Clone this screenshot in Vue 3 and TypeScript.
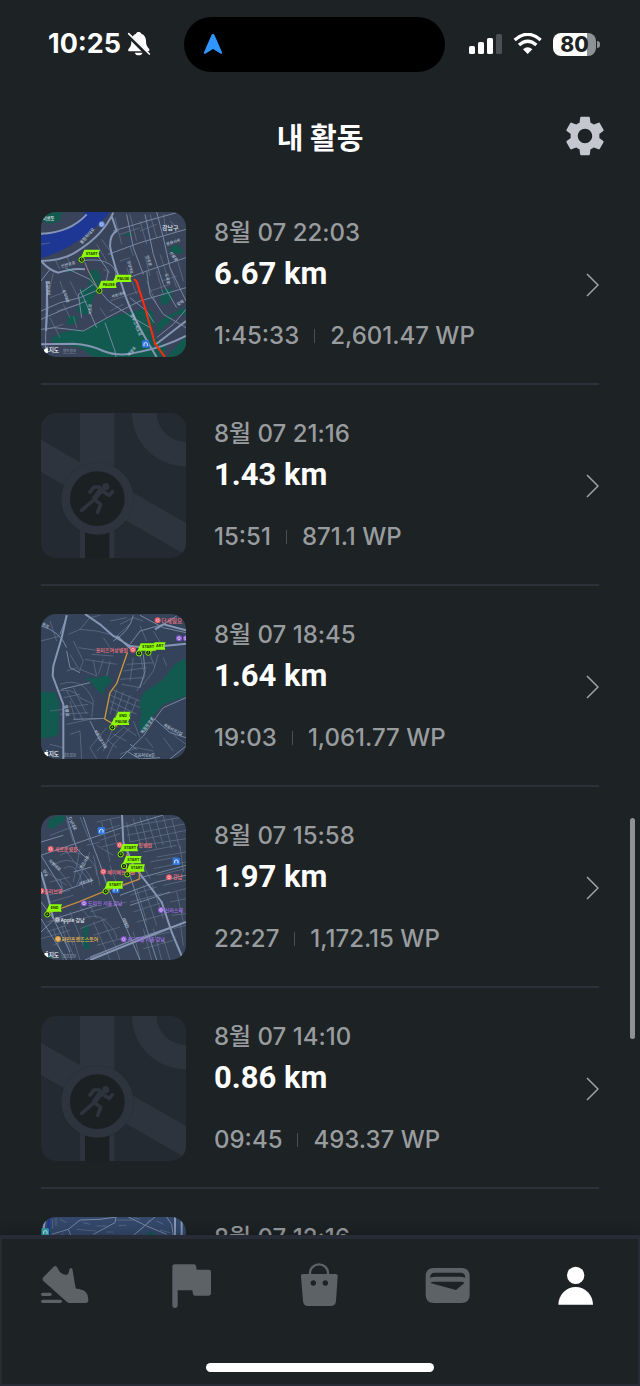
<script setup lang="ts">
interface Label { t: string; x: number; y: number; c?: string; r?: number; s?: number }
interface Pin { t: string; x: number; y: number; w?: number; dx?: number; dy?: number }
interface Badge { x: number; y: number; c: string; k: 'dot' | 'box' }
interface MapArt {
  box: string
  land: string
  parks: string
  water: string
  minor: string
  mid: string
  major: string
  route: string
  routeColor: string
  faint: string
  labels: Label[]
  badges: Badge[]
  pins: Pin[]
}
interface Activity { id: number; date: string; km: string; time: string; wp: string; map: MapArt | null }

const RED = '#f5747e'
const VIOLET = '#a673e8'
const ROAD = '#b9c5d8'

const gangnam: MapArt = {
  box: '33 33 435 435',
  land: '#39445a',
  parks: 'M60 415L95 395 140 385 165 390 215 360 270 340 340 325 368 332 375 365 360 385 380 415 410 440 400 468 190 468 150 440 70 425ZM150 265L175 260 180 210 200 205 212 225 205 262 190 290 178 335 160 342 140 330 150 300ZM112 345L145 345 140 365 112 375ZM380 370L400 350 468 318V345L440 340 380 400ZM392 290L400 265 425 262 428 290 410 312 394 310ZM420 140L440 130 460 150 450 160 422 155ZM286 98l16-5 4 10-14 4ZM105 205l22-5 3 12-20 3ZM35 33H95L90 60 60 68 33 60ZM435 440L468 405V468H410Z',
  water: 'M33 100Q80 98 105 85 150 65 165 33H240Q215 65 180 92 120 145 33 172Z',
  minor: 'M70 215L60 260M90 240L110 300M80 330L150 310M60 350L90 410M120 240L150 300M90 205L75 175M120 190L110 165 160 140M200 130L230 180M215 115L240 150M255 50L275 130M300 40L320 120M330 60L350 130M360 40L380 110M400 40L410 100M270 180L300 170M290 200L320 280M240 300L330 270M350 240L380 310M380 210L400 280M420 200L440 260M270 100L330 80M330 90L380 70M390 160L410 220M440 170L460 240M130 345L140 380M100 310L120 350M60 290L100 275M240 330L280 310M300 135L310 165M345 165L360 225M395 240L440 225M360 270L420 250M420 60L450 90M50 385L100 370M220 205L240 215M33 130L60 125M210 320L230 350',
  mid: 'M60 205L33 240M50 250L46 468M33 330L90 305 150 290 230 255 350 210 468 170M33 385L75 380 160 390 250 340 330 300 468 260M105 200L180 235 235 300 300 345 360 380M200 160L235 210 225 260M250 90L350 60 440 35M235 160L330 125 468 85M345 40L370 160 400 250 440 320M290 40L310 140 340 220M380 33L400 110 420 200 468 300M150 180Q210 170 240 190 270 210 250 250M33 355L90 330 170 300M150 265L200 380M225 365L255 450 258 468M300 290L350 330 372 365M350 210L360 280 400 340 468 380M380 410L430 370 468 325M190 250L145 280 155 350',
  major: 'M33 180Q110 178 150 145 220 100 250 35M33 98Q120 95 170 40M245 45L260 90Q240 100 240 135 250 190 275 250 300 340 380 468M33 180Q60 210 85 215 130 200 165 205M33 430L130 428Q180 430 220 450 270 470 330 452 400 440 468 405M50 240L52 320 48 390M378 430L468 360',
  route: 'M312 234L320 242 345 320 375 428 405 468',
  routeColor: '#ff2a0d',
  faint: 'M165 185L175 210 205 265',
  labels: [
    { t: '강남구', x: 396, y: 87, c: '#dfe5ee', s: 18 },
    { t: '이름동', x: 38, y: 56, c: '#eef2f7', s: 13 },
    { t: '올림픽대로', x: 155, y: 130, r: -48, s: 13 },
    { t: '신반포로', x: 94, y: 200, r: -14, s: 12 },
    { t: '강남대로', x: 292, y: 180, r: 76, s: 11 },
    { t: '반포대로', x: 50, y: 240, r: 88, s: 12 },
    { t: '서초대로', x: 245, y: 292, r: -18, s: 12 },
    { t: '동작대로', x: 97, y: 268, r: 70, s: 11 },
    { t: '서초로', x: 184, y: 342, r: -88, s: 12 },
    { t: '경부고속도로', x: 301, y: 340, r: 68, s: 13 },
    { t: '봉은사로', x: 410, y: 134, r: -18, s: 12 },
    { t: '언주로', x: 347, y: 165, r: 72, s: 12 },
    { t: '선릉로', x: 418, y: 155, r: 55, s: 12 },
    { t: '도곡로', x: 405, y: 218, r: 78, s: 12 },
    { t: '양재', x: 444, y: 315, r: -32, s: 12 },
    { t: '태봉로', x: 298, y: 466, r: -50, s: 12 },
  ],
  badges: [{ x: 215, y: 70, c: '#5f8ee0', k: 'dot' }, { x: 347, y: 429, c: '#2f76e0', k: 'box' }],
  pins: [
    { t: 'START', x: 163, y: 146, dx: 155, dy: 176 },
    { t: 'PAUSE', x: 258, y: 221 },
    { t: 'PAUSE', x: 214, y: 239, dx: 208, dy: 269 },
  ],
}

const hospital: MapArt = {
  box: '33 29 435 435',
  land: '#35435a',
  parks: 'M164 218L195 222 235 212 245 232 225 250 218 272 200 255 185 235ZM33 262L75 264 88 295 85 390 60 400 33 402ZM468 160L435 180 400 225 340 265 328 300 335 325 325 370 345 385 365 340 400 300 468 275Z',
  water: '',
  minor: 'M60 50L80 110M33 110L90 95M115 90L150 75 200 80M130 110L160 170 150 195 200 215M145 130L215 140M120 150L150 200M110 200L140 190M150 75L180 40 210 33M200 80L260 95 300 60M220 100L240 130M240 50L290 40M270 60L310 40 340 50M330 65L350 110M370 80L400 130M190 170L200 215M220 165L205 210M240 170L230 215M165 165L260 180M185 150L250 155M90 240Q160 215 190 290L185 340M80 260Q130 250 150 280L190 300M100 280L150 270M100 310L175 300M110 260L150 330 160 350M90 330L175 325M130 250L170 330M120 290L135 345M110 360L180 345 225 342M235 270L330 310M245 255L330 290M240 290L320 330M240 310L300 340M260 255L240 330M280 262L255 340M300 272L275 345M320 285L295 350M270 225L340 220M280 200L350 190M290 180L370 175M275 240L330 250M330 150L345 215 320 260M360 150L375 190M385 150L370 200 340 240M400 160L410 185M310 160L300 230M230 370L180 430 200 464M245 380L220 440M300 370L250 420 230 464M280 370L200 440M320 395L270 360M310 350L330 400M250 390L290 410M230 405L260 430M120 390L150 380 155 464M60 420L100 430M60 320L100 315M345 400L370 430M400 400L430 440M410 360L440 400 468 420M270 450L320 430 370 440',
  mid: 'M33 65Q90 80 110 130M112 33L90 90M110 140L120 190 150 205M250 110Q300 80 310 33M300 120L330 80 400 60M330 33L400 70 468 85M400 60L440 35M130 345L225 342M340 150L345 200 330 250M370 350L400 310 468 280M370 350L340 395 270 464M180 350L210 410M300 420L320 435M420 464L468 425M290 440L330 464 390 460M375 345L420 385 468 400M95 255L180 235',
  major: 'M110 33L95 100 70 185 68 215 100 300 100 464M165 29L210 60 250 95 300 125 350 130 468 118M260 95L310 140M375 75L400 60 468 78',
  route: 'M292 145L260 238 240 265 224 344 262 366',
  routeColor: '#c9963f',
  faint: '',
  labels: [
    { t: '더세일요', x: 394, y: 55, c: RED, s: 17 },
    { t: '포미즈여성병원', x: 197, y: 143, c: RED, s: 15 },
    { t: '원로', x: 35, y: 62, r: 28, s: 12 },
    { t: '청룡로', x: 103, y: 302, r: 82, s: 13 },
    { t: '북중앙로14길', x: 192, y: 380, r: 58, s: 11 },
    { t: '복음중앙로', x: 338, y: 390, r: -54, s: 13 },
    { t: '복음서로2길', x: 400, y: 365, r: 28, s: 12 },
    { t: '복음서로6길', x: 312, y: 459, s: 12 },
  ],
  badges: [
    { x: 383, y: 48, c: '#e85c66', k: 'dot' },
    { x: 309, y: 136, c: '#e85c66', k: 'dot' },
    { x: 447, y: 102, c: '#8c5cd8', k: 'dot' },
    { x: 468, y: 102, c: '#8c5cd8', k: 'dot' },
  ],
  pins: [
    { t: 'ART', x: 374, y: 114, w: 33, dx: 355, dy: 145 },
    { t: 'START', x: 332, y: 117, dx: 327, dy: 147 },
    { t: 'END', x: 264, y: 322, w: 38 },
    { t: 'PAUSE', x: 252, y: 340, dx: 247, dy: 369 },
  ],
}

const downtown: MapArt = {
  box: '33 29 435 435',
  land: '#37445a',
  parks: 'M60 40L90 29 106 35 100 50 65 72 52 62ZM160 365L172 357 178 370 170 395 180 430 165 432 158 410ZM33 445L60 450 65 464H33Z',
  water: '',
  minor: 'M110 45L130 110M150 35L180 110M60 90L140 60M200 50L270 35M205 80L270 60M210 105L270 85M215 125L265 112M215 50L240 170M240 40L260 110M290 50L300 110M310 40L335 130M330 35L355 130M350 33L380 130M375 33L400 120M400 33L425 130M425 40L450 130M290 65L460 35M290 90L468 55M300 110L468 75M340 120L468 100M340 140L440 120M380 155L468 140M360 170L440 155M370 190L468 170M380 210L468 190M400 240L468 225M410 265L468 250M420 290L468 280M425 330L468 325M90 150Q120 130 160 150T200 210M70 180Q110 150 150 180T185 240M100 190Q130 170 150 210L160 250M60 160L130 250M110 140L180 230M50 200L110 240M60 230L120 215M150 130L130 230M180 140L140 240M90 220L100 260M50 270L120 255M60 290L130 270M190 150L210 240M210 180L230 240M240 180L260 235M90 330L130 420M120 320L160 420M150 305L180 340M180 300L200 340M160 340Q200 320 230 350T260 400M150 370L230 340M190 350L230 440M215 340L260 430M190 390L270 365M200 420L290 395M130 450L110 400 70 420M50 380L110 360M50 350L90 340M33 400L120 375M70 370L100 464M95 360L125 464M130 400L150 464M300 270L380 245M300 290L395 265M310 320L400 290M320 350L410 325M310 380L330 464M340 370L365 464M370 370L395 464M340 240L380 360M320 250L350 350M365 235L400 340M330 400L420 380M340 430L430 405M400 400L420 464M450 350L460 420M430 370L468 360M340 180L360 220M440 260L460 350M230 440L240 464M260 435L270 464M180 320L290 290M200 120L250 150M170 120L210 110M450 120L460 200',
  mid: 'M33 150L150 110 280 65 400 29M33 150L95 250M110 33L140 130 170 160M33 110L100 90M160 35L185 110 215 190 235 250 290 370 330 464M130 200L185 185M90 260L190 225M33 340L110 464M33 290L70 340 120 440M260 250L340 215 468 180M270 270L380 230 468 210M300 300L420 260M165 464L320 400 468 350M180 455L330 395M33 380L75 340 200 300M300 210L350 370 380 464',
  major: 'M276 29L280 110 310 180 345 225 395 290 425 380 460 464M180 464L350 395 468 350M33 200L50 260 70 340',
  route: 'M52 324L150 288 228 256 280 238 327 222 330 195 295 205 285 180 292 145',
  routeColor: '#c48a3c',
  faint: '',
  labels: [
    { t: '새로운병원', x: 74, y: 137, c: RED, s: 15 },
    { t: '민병원', x: 325, y: 124, c: RED, s: 15 },
    { t: '베이베논무원', x: 232, y: 205, c: RED, s: 15 },
    { t: '강남', x: 428, y: 222, c: RED, s: 16 },
    { t: '올리브영', x: 42, y: 262, c: RED, s: 15 },
    { t: '도미인 서울 강남', x: 174, y: 300, c: VIOLET, s: 15 },
    { t: '신라스테', x: 404, y: 319, c: VIOLET, s: 15 },
    { t: 'AC 호텔 서울 강남', x: 293, y: 408, c: VIOLET, s: 15 },
    { t: 'Apple 강남', x: 92, y: 349, c: '#e3e7ee', s: 15 },
    { t: '라인프렌즈스토어', x: 95, y: 406, c: '#eebc4e', s: 15 },
    { t: '강남대로', x: 114, y: 36, r: 65, s: 12 },
    { t: '사평대로', x: 55, y: 168, r: 42, s: 12 },
    { t: '봉은사로', x: 155, y: 192, r: -58, s: 12 },
    { t: '서초대로', x: 148, y: 240, r: -18, s: 12 },
    { t: '테헤란', x: 276, y: 340, r: 65, s: 12 },
    { t: '반포', x: 38, y: 195, r: 70, s: 12 },
  ],
  badges: [
    { x: 214, y: 76, c: '#2f76e0', k: 'box' },
    { x: 439, y: 168, c: '#2f76e0', k: 'box' },
    { x: 257, y: 252, c: '#2f76e0', k: 'box' },
    { x: 62, y: 131, c: '#e85c66', k: 'dot' },
    { x: 269, y: 119, c: '#e85c66', k: 'dot' },
    { x: 220, y: 199, c: '#e85c66', k: 'dot' },
    { x: 417, y: 216, c: '#e85c66', k: 'dot' },
    { x: 34, y: 257, c: '#e85c66', k: 'dot' },
    { x: 162, y: 294, c: '#8c5cd8', k: 'dot' },
    { x: 393, y: 314, c: '#8c5cd8', k: 'dot' },
    { x: 281, y: 402, c: '#8c5cd8', k: 'dot' },
    { x: 82, y: 343, c: '#8b93a3', k: 'dot' },
    { x: 84, y: 401, c: '#d99a2b', k: 'dot' },
  ],
  pins: [
    { t: 'START', x: 278, y: 116, dx: 272, dy: 147 },
    { t: 'START', x: 288, y: 152, dx: 282, dy: 182 },
    { t: 'START', x: 298, y: 177, dx: 292, dy: 207 },
    { t: 'START', x: 233, y: 228, dx: 227, dy: 258 },
    { t: 'END', x: 58, y: 297, w: 38, dx: 52, dy: 327 },
  ],
}

const riverside: MapArt = {
  box: '123 53 435 435',
  land: '#33486a',
  parks: 'M440 105L452 94 466 108Z',
  water: 'M145 53H150V125H138Z',
  minor: 'M158 60V88M168 56V80M290 80H320M320 98H340M350 62H400M355 78H380M410 100L430 85M470 65L490 75M480 92L510 100M180 60L200 70M250 70L270 75M230 90L290 95M190 100L180 115M400 55L420 60M450 60L440 75',
  mid: 'M155 105L205 90 240 62 300 60 350 53M205 90L215 115M280 105L345 70 348 53M385 53L440 80 500 105M400 108L465 53M500 53L515 75 520 110',
  major: 'M135 60L128 110M545 60V488M525 53V488',
  route: '', routeColor: 'none', faint: '',
  labels: [],
  badges: [{ x: 136, y: 98, c: '#2fa3a8', k: 'box' }],
  pins: [],
}

const activities: Activity[] = [
  { id: 1, date: '8월 07 22:03', km: '6.67 km', time: '1:45:33', wp: '2,601.47 WP', map: gangnam },
  { id: 2, date: '8월 07 21:16', km: '1.43 km', time: '15:51', wp: '871.1 WP', map: null },
  { id: 3, date: '8월 07 18:45', km: '1.64 km', time: '19:03', wp: '1,061.77 WP', map: hospital },
  { id: 4, date: '8월 07 15:58', km: '1.97 km', time: '22:27', wp: '1,172.15 WP', map: downtown },
  { id: 5, date: '8월 07 14:10', km: '0.86 km', time: '09:45', wp: '493.37 WP', map: null },
  { id: 6, date: '8월 07 12:16', km: '1.12 km', time: '12:20', wp: '640.2 WP', map: riverside },
]

function tagPath(p: Pin): string {
  const w = p.w ?? 47
  return `M${p.x} ${p.y}h${w}l-4 11 3 11h-${w + 4}l-3 6-3-2Z`
}
</script>

<template>
  <div class="app">
    <div class="status">
      <div class="clock">
        <span>10:25</span>
        <svg width="24" height="26" viewBox="262 33 72 78" aria-hidden="true">
          <path fill="#fff" d="M297 36c4 0 7 2 8 5 9 3 14 11 14 21 0 14 4 18 9 24 3 5 1 8-4 8H270c-5 0-6-4-3-8 6-6 8-11 8-24 0-10 6-18 14-21 1-3 4-5 8-5ZM285 98h24c-2 5-6 8-12 8s-10-3-12-8Z" />
          <path d="M262 42L326 106" stroke="#1d2225" stroke-width="12" />
          <path d="M267 41L329 102" stroke="#fff" stroke-width="5" stroke-linecap="round" />
        </svg>
      </div>
      <div class="island">
        <svg width="20" height="22" viewBox="0 0 20 22" aria-hidden="true">
          <path fill="#2f95ff" d="M10 1c.8 0 1.300.5 1.600 1.300L19 19.200c.5 1.300-.6 2-1.600 1.300L10 16l-7.400 4.500C1.600 21.200.5 20.500 1 19.200L8.400 2.300C8.700 1.500 9.200 1 10 1Z" />
        </svg>
      </div>
      <div class="signals">
        <svg width="34" height="22" viewBox="0 0 34 22" fill="#fff" aria-hidden="true">
          <rect x="0" y="13" width="6" height="8" rx="1.500" /><rect x="9" y="9" width="6" height="12" rx="1.500" />
          <rect x="18" y="5" width="6" height="16" rx="1.500" /><rect x="27" y="1" width="6" height="20" rx="1.500" fill="#4c5054" />
        </svg>
        <svg width="30" height="22" viewBox="160 36 90 66" aria-hidden="true">
          <path fill="none" stroke="#fff" stroke-width="10" d="M165 57Q204 23 243 57M178 72Q204 49 230 72" />
          <path fill="#fff" d="M204 99L190 85Q204 73 218 85Z" />
        </svg>
        <div class="battery"><span>80</span></div>
      </div>
    </div>

    <header class="head">
      <h1>내 활동</h1>
      <button class="gear" type="button" aria-label="설정">
        <svg width="48" height="48" viewBox="0 0 24 24" aria-hidden="true">
          <path fill="#c5c7cf" d="M19.140 12.940c.04-.3.06-.61.06-.94 0-.32-.02-.64-.07-.94l2.030-1.580c.18-.14.23-.41.12-.61l-1.920-3.320c-.12-.22-.37-.29-.59-.22l-2.390.96c-.5-.38-1.030-.7-1.620-.94l-.36-2.540c-.04-.24-.24-.41-.48-.41h-3.840c-.24 0-.43.17-.47.41l-.36 2.540c-.59.24-1.130.57-1.620.94l-2.390-.96c-.22-.08-.47 0-.59.22L2.740 8.870c-.12.21-.08.47.12.61l2.030 1.580c-.05.3-.09.63-.09.94s.02.64.07.94l-2.030 1.580c-.18.14-.23.41-.12.61l1.920 3.320c.12.22.37.29.59.22l2.390-.96c.5.38 1.030.7 1.620.94l.36 2.540c.05.24.24.41.48.41h3.840c.24 0 .44-.17.47-.41l.36-2.540c.59-.24 1.130-.56 1.620-.94l2.390.96c.22.08.47 0 .59-.22l1.920-3.320c.12-.22.07-.47-.12-.61l-2.010-1.580zM12 15.600c-1.980 0-3.600-1.620-3.600-3.600s1.620-3.600 3.600-3.600 3.600 1.620 3.600 3.600-1.620 3.600-3.600 3.600z" />
        </svg>
      </button>
    </header>

    <main class="pane">
      <ul class="list">
        <li v-for="a in activities" :key="a.id">
          <a class="row" href="#">
            <svg v-if="a.map" class="thumb" :viewBox="a.map.box" aria-hidden="true">
              <rect width="600" height="600" :fill="a.map.land" />
              <path :d="a.map.parks" fill="#12594f" />
              <path :d="a.map.water" fill="#1f3794" />
              <g fill="none" stroke-linejoin="round">
                <path :d="a.map.minor" stroke="#66758e" stroke-width="2" />
                <path :d="a.map.mid" stroke="#7786a1" stroke-width="3" />
                <path :d="a.map.major" stroke="#8595b3" stroke-width="6" />
                <path :d="a.map.faint" stroke="#a88480" stroke-width="3" />
                <path :d="a.map.route" :stroke="a.map.routeColor" :stroke-width="a.map.routeColor === '#ff2a0d' ? 6 : 4" />
              </g>
              <g v-for="(b, i) in a.map.badges" :key="'b' + i">
                <rect v-if="b.k === 'box'" :x="b.x - 11" :y="b.y - 11" width="22" height="22" rx="4" :fill="b.c" />
                <circle v-else :cx="b.x" :cy="b.y" r="9" :fill="b.c" />
                <path v-if="b.k === 'box'" :d="`M${b.x - 5} ${b.y + 6}v-8q5-5 10 0v8`" fill="none" stroke="#dce8ff" stroke-width="3" />
                <circle v-else :cx="b.x" :cy="b.y" r="4" fill="none" stroke="#f3d9e4" stroke-width="2" />
              </g>
              <text
                v-for="(l, i) in a.map.labels" :key="'l' + i" :x="l.x" :y="l.y" :fill="l.c ?? ROAD"
                :font-size="l.s ?? 13" :transform="l.r ? `rotate(${l.r} ${l.x} ${l.y})` : undefined"
              >{{ l.t }}</text>
              <g v-for="(p, i) in a.map.pins" :key="'p' + i">
                <path :d="tagPath(p)" fill="#8dfb06" />
                <text class="tag" :x="p.x + 4" :y="p.y + 15">{{ p.t }}</text>
                <g v-if="p.dx && p.dy">
                  <circle :cx="p.dx" :cy="p.dy" r="8" fill="#10190a" stroke="#8dfb06" stroke-width="3" />
                  <path :d="`M${p.dx} ${p.dy}v-5M${p.dx - 3} ${p.dy + 1}h6`" stroke="#8dfb06" stroke-width="2" />
                </g>
              </g>
              <g v-if="a.map.pins.length" fill="#fff">
                <path d="M47 443c3-2 8-1 8 2-3 2-2 5 1 6-2 6-4 5-7 4-4 2-7-2-7-6s2-6 5-6ZM49 441c0-3 2-4 4-4 0 3-2 4-4 4Z" />
                <text x="56" y="454" font-size="17">지도</text>
                <text class="legal" x="99" y="454">법적 정보</text>
              </g>
            </svg>
            <svg v-else class="thumb" viewBox="33 27 435 435" aria-hidden="true">
              <rect width="600" height="600" fill="#242a32" />
              <g fill="#2d343e">
                <path d="M150 27H253V462H150Z" />
                <path d="M33 107L468 357V453L33 204Z" />
                <path d="M306 27A162 160 0 0 0 468 187V114A88 87 0 0 1 380 27Z" />
              </g>
              <circle cx="202" cy="284" r="111" fill="#20262d" opacity=".2" />
              <path d="M165 370H238V462H165Z" fill="#1b2023" />
              <circle cx="202" cy="284" r="95" fill="#1b2023" stroke="#2d343e" stroke-width="26" />
              <circle cx="227" cy="248" r="11" fill="#2d343e" />
              <path d="M180 264L192 249 208 249 218 262 238 274 247 263M216 259L193 286 155 319M193 286L212 301 203 325" fill="none" stroke="#2d343e" stroke-width="11" stroke-linecap="round" stroke-linejoin="round" />
              <path d="M207 252L219 263 200 287 185 281Z" fill="#2d343e" />
            </svg>
            <div class="info">
              <span class="date">{{ a.date }}</span>
              <strong class="km">{{ a.km }}</strong>
              <span class="meta"><span>{{ a.time }}</span><i class="bar"></i><span>{{ a.wp }}</span></span>
            </div>
            <svg class="chevron" width="14" height="24" viewBox="0 0 14 24" aria-hidden="true">
              <path d="M2 1L13 12L2 23" fill="none" stroke="#a0a3a6" stroke-width="1.500" />
            </svg>
          </a>
        </li>
      </ul>
    </main>
    <div class="thumbbar"></div>

    <nav class="tabs">
      <button type="button" aria-label="운동">
        <svg viewBox="114 177 156 156" aria-hidden="true">
          <path d="M161 200q5-4 10 1l7 13q10 12 23 10 5-1 7-15 2-8 9-3l10 59q2 2 10 2 29 4 28 33 0 9-8 9H209q-5 0-9-4L131 244q-6-6-1-12Z" />
          <rect x="123" y="278" width="32" height="10" rx="5" /><rect x="123" y="299" width="63" height="10" rx="5" />
        </svg>
      </button>
      <button type="button" aria-label="챌린지">
        <svg viewBox="498 177 156 156" aria-hidden="true">
          <path d="M524 193h58q5 0 6 5l2 11h36q7 0 7 7v64q0 7-7 7h-41q-5 0-6-5l-2-11h-44v45q0 8-8 8t-8-8V201q0-8 7-8Z" />
        </svg>
      </button>
      <button type="button" aria-label="상점">
        <svg viewBox="12 12 156 156" aria-hidden="true">
          <path d="M60 59V54a27 26 0 0 1 54 0V59" fill="none" stroke="#5c6266" stroke-width="7" />
          <path fill-rule="evenodd" d="M39 57h98q7 0 6 8l-5 73q-1 15-16 15H54q-14 0-15-15L33 65q-1-8 6-8ZM70 76a8 8 0 1 0 0 16 8 8 0 1 0 0-16ZM106 76a8 8 0 1 0 0 16 8 8 0 1 0 0-16Z" />
        </svg>
      </button>
      <button type="button" aria-label="지갑">
        <svg viewBox="306 177 156 156" aria-hidden="true">
          <path fill-rule="evenodd" d="M342 204h82q25 0 25 25v55q0 25-25 25h-82q-25 0-25-25v-55q0-25 25-25ZM330 233q7-3 18-3h70q11 0 18 3-1-15-14-15h-78q-13 0-14 15ZM331 249q4-4 12-4h81q6 0 9 4l-25 21Z" />
        </svg>
      </button>
      <button type="button" class="active" aria-label="내 활동" aria-current="page">
        <svg viewBox="690 177 156 156" aria-hidden="true">
          <circle cx="767" cy="226" r="26" /><path d="M715 314a52 53 0 0 1 104 0Z" />
        </svg>
      </button>
      <div class="home"></div>
    </nav>
  </div>
</template>

<style>
html, body { margin: 0; background: #1d2225; }
</style>

<style scoped>
.app {
  position: relative;
  display: flex;
  flex-direction: column;
  height: 100vh;
  overflow: hidden;
  background: #1d2225;
  color: #fff;
  font-family: Inter, "Noto Sans CJK KR", sans-serif;
}
button { border: 0; background: none; padding: 0; display: flex; align-items: center; justify-content: center; }
.status {
  flex: none;
  height: 88px;
  display: grid;
  grid-template-columns: 1fr 261px 1fr;
  align-items: center;
  padding-right: 11px;
}
.clock { display: flex; align-items: center; gap: 6px; padding-left: 48px; font-size: 27px; font-weight: 700; line-height: 32px; }
.island { height: 55px; border-radius: 28px; background: #000; display: flex; align-items: center; padding-left: 19px; box-sizing: border-box; }
.signals { display: flex; align-items: center; justify-content: flex-end; gap: 10px; padding-right: 33px; }
.battery {
  position: relative;
  width: 43px;
  height: 23px;
  border-radius: 8px;
  background: linear-gradient(90deg, #fff 80%, #8f9294 80%);
  color: #1d2225;
  font-size: 21px;
  font-weight: 800;
  line-height: 23px;
  text-align: center;
}
.battery::after {
  content: "";
  position: absolute;
  right: -4px;
  top: 8px;
  width: 3px;
  height: 7px;
  border-radius: 0 4px 4px 0;
  background: #8f9294;
}
.head {
  flex: none;
  height: 96px;
  display: grid;
  grid-template-columns: 1fr auto 1fr;
  align-items: center;
}
h1 { grid-column: 2; margin: 0; font-family: "Noto Sans CJK KR", sans-serif; font-size: 29px; line-height: 40px; font-weight: 700; }
.gear { justify-self: end; margin-right: 31px; }
.pane { flex: 1; min-height: 0; overflow: hidden; }
.list { list-style: none; margin: 0; padding: 0 41px; }
.row {
  display: flex;
  padding: 28px 0 26px;
  border-bottom: 2px solid #2b303b;
  color: inherit;
  text-decoration: none;
}
.thumb {
  flex: none;
  width: 145px;
  height: 145px;
  border-radius: 15px;
  font-family: "Noto Sans CJK KR", sans-serif;
  font-weight: 500;
}
.tag { font-family: Inter, sans-serif; font-size: 11px; font-weight: 700; fill: #1c3300; }
.legal { font-size: 10px; fill: #8994a6; text-decoration: underline; }
.info { flex: 1; display: flex; flex-direction: column; padding: 5px 0 0 28px; }
.date, .meta { font-size: 24px; line-height: 32px; font-weight: 500; color: #999c9f; }
.km { margin: 7px 0 28px; font-family: Roboto, sans-serif; font-size: 31px; line-height: 36px; font-weight: 700; }
.meta { display: flex; align-items: center; gap: 15px; }
.bar { width: 1px; height: 14px; background: #4b4f54; }
.chevron { align-self: center; }
.thumbbar {
  position: absolute;
  right: 5px;
  top: 59%;
  width: 5px;
  height: 16%;
  border-radius: 3px;
  background: #8f9193;
}
.tabs {
  position: relative;
  flex: none;
  height: 151px;
  display: grid;
  grid-template-columns: repeat(5, 1fr);
  align-items: start;
  box-sizing: border-box;
  padding-top: 24px;
  background: #1d2225;
  box-shadow: inset 0 4px #262b35, inset 2px 0 #262b35, inset -2px -2px #262b35, 0 -4px 10px rgba(0, 0, 0, .18);
}
.tabs svg { width: 52px; height: 52px; fill: #5c6266; }
.tabs .active svg { fill: #fff; }
.home {
  position: absolute;
  left: 50%;
  bottom: 14px;
  width: 228px;
  height: 9px;
  margin-left: -114px;
  border-radius: 5px;
  background: #fff;
}
</style>
